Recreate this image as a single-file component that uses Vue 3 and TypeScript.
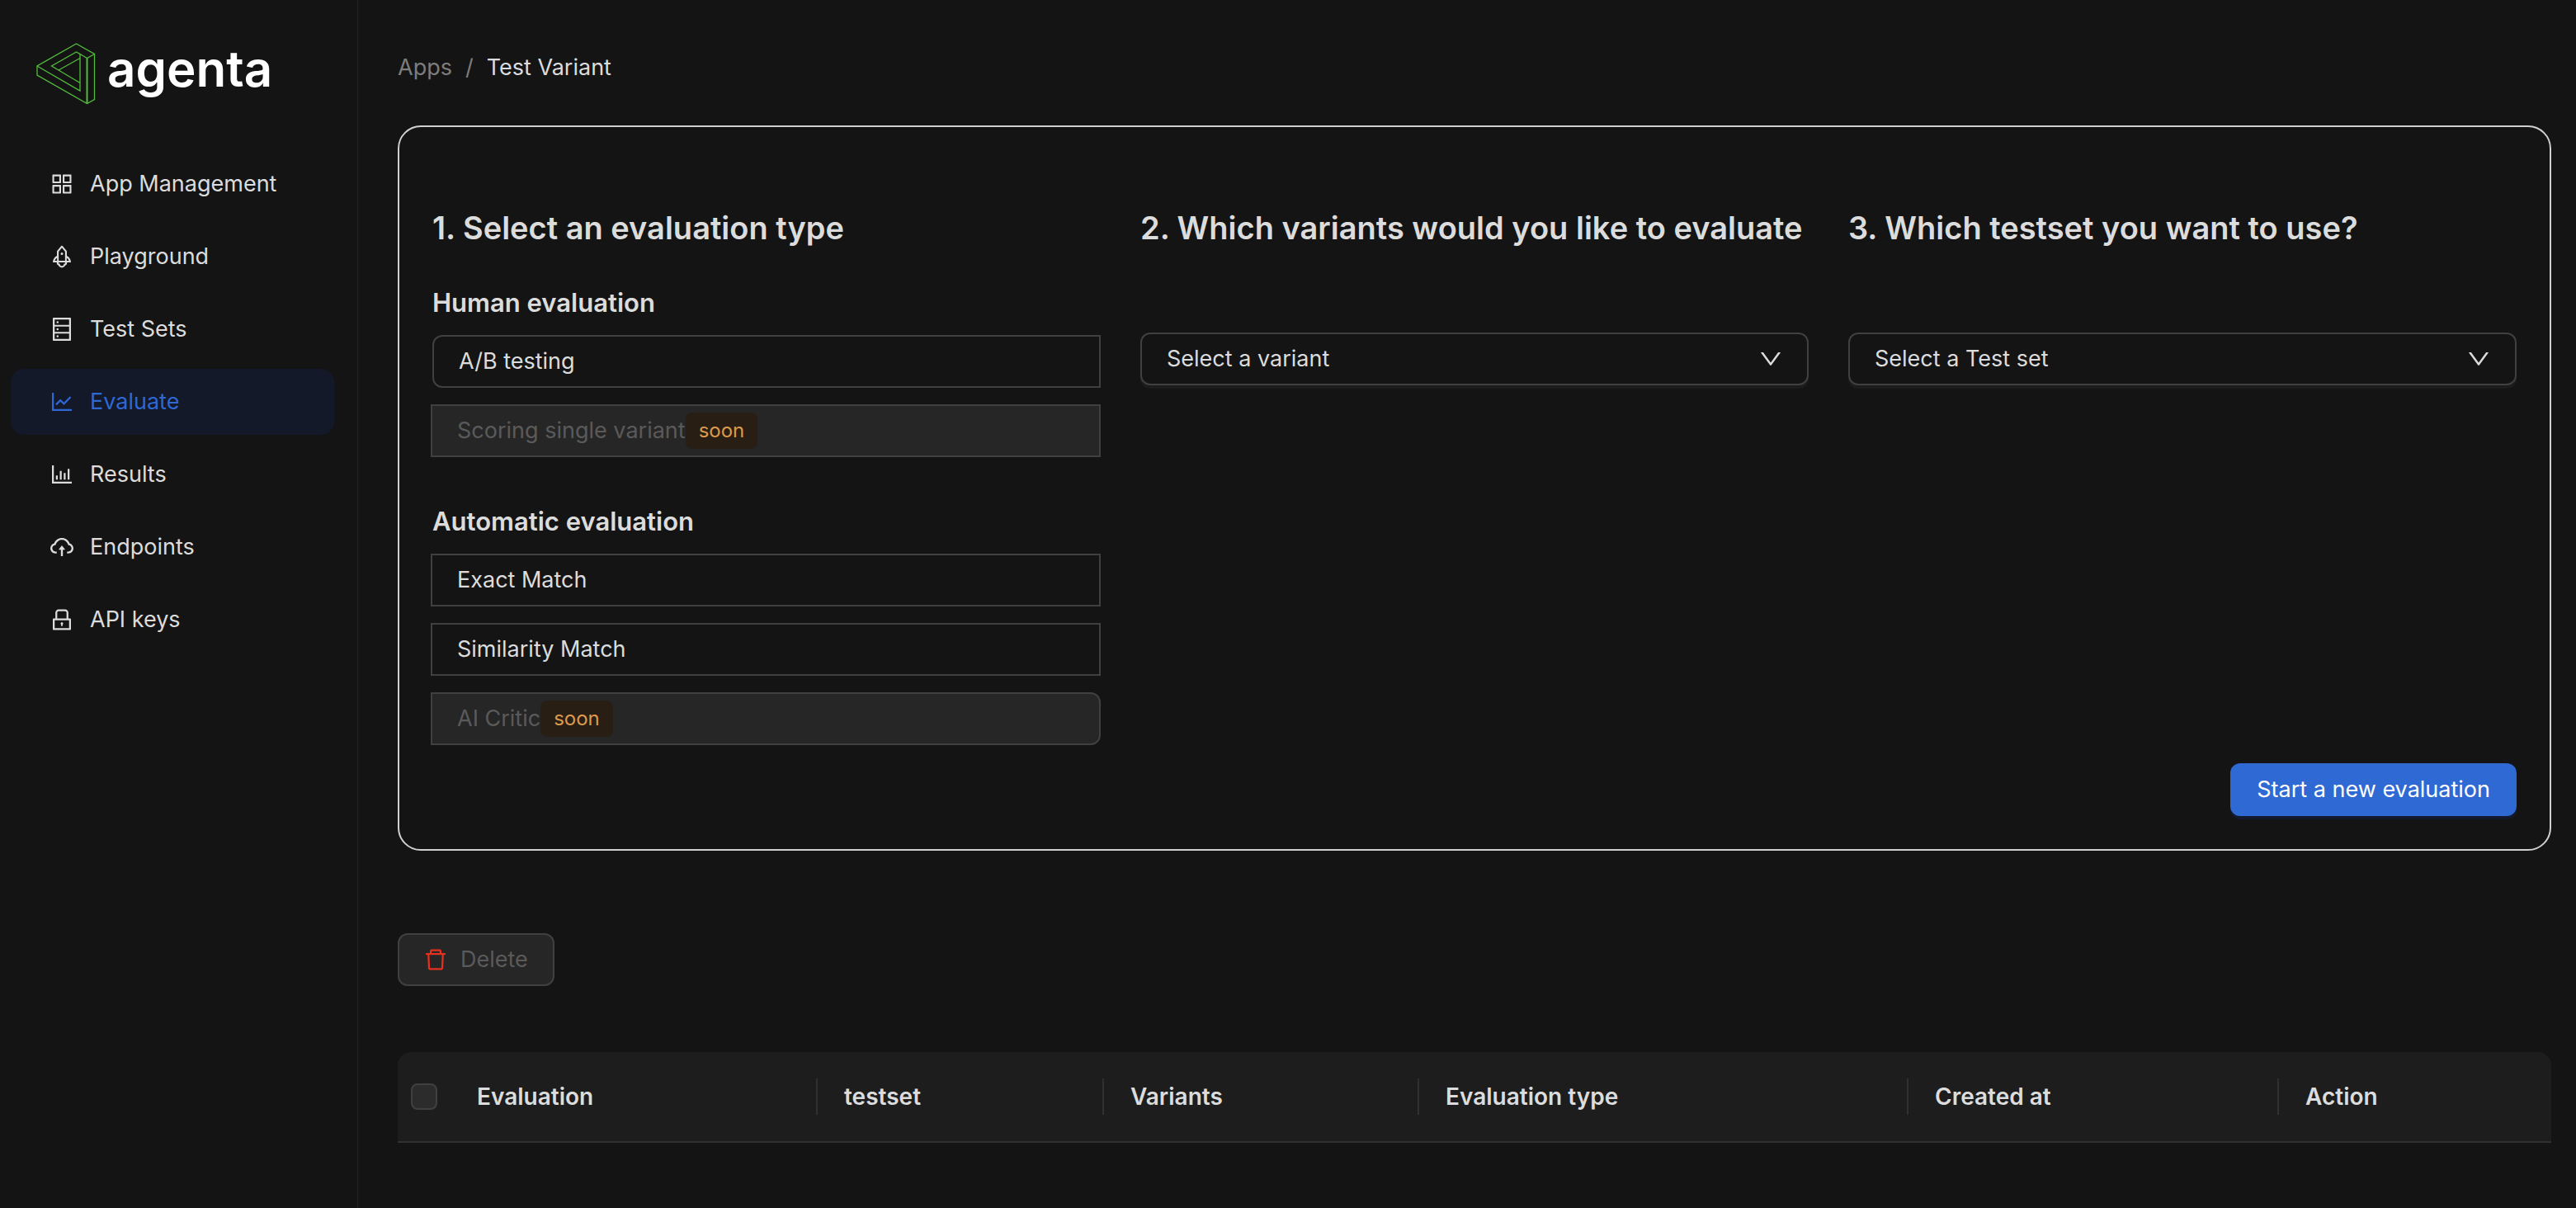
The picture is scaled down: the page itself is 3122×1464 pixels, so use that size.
<script setup lang="ts">
import { ref } from 'vue'

interface NavItem {
  label: string
  paths: string[]
  active?: boolean
}

interface EvaluationType {
  value: string
  label: string
  soon?: boolean
}

interface EvaluationGroup {
  title: string
  types: EvaluationType[]
}

const navItems: NavItem[] = [
  {
    label: 'App Management',
    paths: [
      'M464 144H160c-8.8 0-16 7.2-16 16v304c0 8.8 7.2 16 16 16h304c8.8 0 16-7.2 16-16V160c0-8.8-7.2-16-16-16zm-52 268H212V212h200v200zm452-268H560c-8.8 0-16 7.2-16 16v304c0 8.8 7.2 16 16 16h304c8.8 0 16-7.2 16-16V160c0-8.8-7.2-16-16-16zm-52 268H612V212h200v200zM464 544H160c-8.8 0-16 7.2-16 16v304c0 8.8 7.2 16 16 16h304c8.8 0 16-7.2 16-16V560c0-8.8-7.2-16-16-16zm-52 268H212V612h200v200zm452-268H560c-8.8 0-16 7.2-16 16v304c0 8.8 7.2 16 16 16h304c8.8 0 16-7.2 16-16V560c0-8.8-7.2-16-16-16zm-52 268H612V612h200v200z',
    ],
  },
  {
    label: 'Playground',
    paths: [
      'M864 736c0-111.6-65.4-208-160-252.9V317.3c0-15.1-5.3-29.7-15.1-41.2L536.5 95.4C530.1 87.8 521 84 512 84s-18.1 3.8-24.5 11.4L335.1 276.1a63.97 63.97 0 00-15.1 41.2v165.8C225.4 528 160 624.4 160 736h156.5c-2.3 7.2-3.5 15-3.5 23.8 0 22.1 7.6 43.7 21.4 60.8a97.2 97.2 0 0043.1 30.6c23.1 54 75.6 88.8 134.5 88.8 29.1 0 57.3-8.6 81.4-24.8 23.6-15.8 41.9-37.9 53-64a97 97 0 0043.1-30.5 97.52 97.52 0 0021.4-60.8c0-8.4-1.1-16.4-3.1-23.8H864zM762.3 621.4c9.4 14.6 17 30.3 22.5 46.6H700V558.7a211.6 211.6 0 0162.3 62.7zM388 483.1V318.8l124-147 124 147V668H388V483.1zM239.1 668c5.5-16.3 13.1-32 22.5-46.6 16.3-25.2 37.5-46.5 62.3-62.7V668h-84.8zm388.9 116.2c-5.2 3-11.2 4.2-17.1 3.4l-19.5-2.4-2.8 19.4c-5.4 37.9-38.4 66.5-76.7 66.5-38.3 0-71.3-28.6-76.7-66.5l-2.8-19.5-19.5 2.5a27.7 27.7 0 01-17.1-3.5c-8.7-5-14.1-14.3-14.1-24.4 0-10.6 5.9-19.4 14.6-23.8h231.3c8.8 4.5 14.6 13.3 14.6 23.8-.1 10.2-5.5 19.6-14.2 24.5zM464 400a48 48 0 1096 0 48 48 0 10-96 0z',
    ],
  },
  {
    label: 'Test Sets',
    paths: [
      'M832 64H192c-17.7 0-32 14.3-32 32v832c0 17.7 14.3 32 32 32h640c17.7 0 32-14.3 32-32V96c0-17.7-14.3-32-32-32zm-600 72h560v208H232V136zm560 480H232V408h560v208zm0 272H232V680h560v208zM304 240a40 40 0 1080 0 40 40 0 10-80 0zm0 272a40 40 0 1080 0 40 40 0 10-80 0zm0 272a40 40 0 1080 0 40 40 0 10-80 0z',
    ],
  },
  {
    label: 'Evaluate',
    active: true,
    paths: [
      'M888 792H200V168c0-4.4-3.6-8-8-8h-56c-4.4 0-8 3.6-8 8v688c0 4.4 3.6 8 8 8h752c4.4 0 8-3.6 8-8v-56c0-4.4-3.6-8-8-8zM305.8 637.7c3.1 3.1 8.1 3.1 11.3 0l138.3-137.6L583 628.5c3.1 3.1 8.2 3.1 11.3 0l275.4-275.3c3.1-3.1 3.1-8.2 0-11.3l-39.6-39.6a8.03 8.03 0 00-11.3 0l-230 229.9L461.4 404a8.03 8.03 0 00-11.3 0L266.3 586.7a8.03 8.03 0 000 11.3l39.5 39.7z',
    ],
  },
  {
    label: 'Results',
    paths: [
      'M888 792H200V168c0-4.4-3.6-8-8-8h-56c-4.4 0-8 3.6-8 8v688c0 4.4 3.6 8 8 8h752c4.4 0 8-3.6 8-8v-56c0-4.4-3.6-8-8-8zm-600-80h56c4.4 0 8-3.6 8-8V560c0-4.4-3.6-8-8-8h-56c-4.4 0-8 3.6-8 8v144c0 4.4 3.6 8 8 8zm152 0h56c4.4 0 8-3.6 8-8V384c0-4.4-3.6-8-8-8h-56c-4.4 0-8 3.6-8 8v320c0 4.4 3.6 8 8 8zm152 0h56c4.4 0 8-3.6 8-8V462c0-4.4-3.6-8-8-8h-56c-4.4 0-8 3.6-8 8v242c0 4.4 3.6 8 8 8zm152 0h56c4.4 0 8-3.6 8-8V304c0-4.4-3.6-8-8-8h-56c-4.4 0-8 3.6-8 8v400c0 4.4 3.6 8 8 8z',
    ],
  },
  {
    label: 'Endpoints',
    paths: [
      'M518.3 459a8 8 0 00-12.6 0l-112 141.7a7.98 7.98 0 006.3 12.9h73.9V856c0 4.4 3.6 8 8 8h60c4.4 0 8-3.6 8-8V613.7H624c6.7 0 10.4-7.7 6.3-12.9L518.3 459z',
      'M811.4 366.7C765.6 245.9 648.9 160 512.2 160S258.8 245.8 213 366.6C127.3 389.1 64 467.2 64 560c0 110.5 89.5 200 199.9 200H304c4.4 0 8-3.6 8-8v-60c0-4.4-3.6-8-8-8h-40.1c-33.7 0-65.4-13.4-89-37.7-23.5-24.2-36-56.8-34.9-90.6.9-26.4 9.9-51.2 26.2-72.1 16.7-21.3 40.1-36.8 66.1-43.7l37.9-9.9 13.9-36.6c8.6-22.8 20.6-44.1 35.7-63.4a245.6 245.6 0 0152.4-49.9c41.1-28.9 89.5-44.2 140-44.2s98.9 15.3 140 44.2c19.9 14 37.5 30.8 52.4 49.9 15.1 19.3 27.1 40.7 35.7 63.4l13.8 36.5 37.8 10C846.1 454.5 884 503.8 884 560c0 33.1-12.9 64.3-36.3 87.7a123.07 123.07 0 01-87.6 36.3H720c-4.4 0-8 3.6-8 8v60c0 4.4 3.6 8 8 8h40.1C870.5 760 960 670.5 960 560c0-92.7-63.1-170.7-148.6-193.3z',
    ],
  },
  {
    label: 'API keys',
    paths: [
      'M832 464h-68V240c0-70.7-57.3-128-128-128H388c-70.7 0-128 57.3-128 128v224h-68c-17.7 0-32 14.3-32 32v384c0 17.7 14.3 32 32 32h640c17.7 0 32-14.3 32-32V496c0-17.7-14.3-32-32-32zM332 240c0-30.9 25.1-56 56-56h248c30.9 0 56 25.1 56 56v224H332V240zm460 600H232V536h560v304zM484 701v53c0 4.4 3.6 8 8 8h40c4.4 0 8-3.6 8-8v-53a48.01 48.01 0 10-56 0z',
    ],
  },
]

const evaluationGroups: EvaluationGroup[] = [
  {
    title: 'Human evaluation',
    types: [
      { value: 'ab', label: 'A/B testing' },
      { value: 'scoring', label: 'Scoring single variant', soon: true },
    ],
  },
  {
    title: 'Automatic evaluation',
    types: [
      { value: 'exact', label: 'Exact Match' },
      { value: 'similarity', label: 'Similarity Match' },
      { value: 'critic', label: 'AI Critic', soon: true },
    ],
  },
]

const columns = [
  { key: 'evaluation', title: 'Evaluation' },
  { key: 'testset', title: 'testset' },
  { key: 'variants', title: 'Variants' },
  { key: 'type', title: 'Evaluation type' },
  { key: 'created', title: 'Created at' },
  { key: 'action', title: 'Action' },
]

const downPath =
  'M884 256h-75c-5.1 0-9.9 2.5-12.9 6.6L512 654.2 227.9 262.6c-3-4.1-7.8-6.6-12.9-6.6h-75c-6.5 0-10.3 7.4-6.5 12.7l352.6 486.1c12.8 17.6 39 17.6 51.7 0l352.6-486.1c3.9-5.3.1-12.7-6.4-12.7z'

const evaluationType = ref('')
const variant = ref('')
const testset = ref('')
</script>

<template>
  <div class="layout">
    <aside class="sidebar">
      <a class="logo" href="#">
        <svg class="logo-mark" viewBox="0 0 73 76" aria-hidden="true">
          <path d="M49.5 2 71.5 14.5V69.500L62.5 74.5 2 40V29Z" />
          <path d="M2 29 54 59V14.5L49.5 12 19.5 29 28 34 54 49.5" />
          <path d="M28 34 54 19.5M54 14.5 62.5 19.5 71.5 14.5" />
          <path class="logo-edge" d="M62.5 19.5V74.5" />
        </svg>
        <span class="logo-text">agenta</span>
      </a>
      <nav class="menu">
        <a
          v-for="item in navItems"
          :key="item.label"
          href="#"
          class="menu-item"
          :class="{ active: item.active }"
        >
          <svg class="icon" viewBox="64 64 896 896" aria-hidden="true">
            <path v-for="d in item.paths" :key="d" :d="d" />
          </svg>
          <span>{{ item.label }}</span>
        </a>
      </nav>
    </aside>

    <main class="content">
      <nav class="breadcrumb" aria-label="Breadcrumb">
        <a href="#">Apps</a>
        <span>/</span>
        <span class="current">Test Variant</span>
      </nav>

      <section class="card">
        <div class="steps">
          <div class="step">
            <h2>1. Select an evaluation type</h2>
            <div v-for="group in evaluationGroups" :key="group.title" class="group">
              <h3>{{ group.title }}</h3>
              <div class="options">
                <label
                  v-for="type in group.types"
                  :key="type.value"
                  class="option"
                  :class="{ disabled: type.soon }"
                >
                  <input
                    v-model="evaluationType"
                    type="radio"
                    name="evaluation-type"
                    :value="type.value"
                    :disabled="type.soon"
                  />
                  <span>{{ type.label }}</span>
                  <span v-if="type.soon" class="tag">soon</span>
                </label>
              </div>
            </div>
          </div>

          <div class="step">
            <h2><label for="variant">2. Which variants would you like to evaluate</label></h2>
            <div class="select-box">
              <select id="variant" v-model="variant">
                <option value="">Select a variant</option>
              </select>
              <svg class="icon arrow" viewBox="64 64 896 896" aria-hidden="true">
                <path :d="downPath" />
              </svg>
            </div>
          </div>

          <div class="step">
            <h2><label for="testset">3. Which testset you want to use?</label></h2>
            <div class="select-box">
              <select id="testset" v-model="testset">
                <option value="">Select a Test set</option>
              </select>
              <svg class="icon arrow" viewBox="64 64 896 896" aria-hidden="true">
                <path :d="downPath" />
              </svg>
            </div>
          </div>
        </div>
        <div class="card-actions">
          <button type="button" class="primary">Start a new evaluation</button>
        </div>
      </section>

      <button type="button" class="delete" disabled>
        <svg class="icon" viewBox="64 64 896 896" aria-hidden="true">
          <path
            d="M360 184h-8c4.4 0 8-3.6 8-8v8h304v-8c0 4.4 3.6 8 8 8h-8v72h72v-80c0-35.3-28.7-64-64-64H352c-35.3 0-64 28.7-64 64v80h72v-72zm504 72H160c-17.7 0-32 14.3-32 32v32c0 4.4 3.6 8 8 8h60.4l24.7 523c1.6 34.1 29.8 61 63.9 61h454c34.2 0 62.3-26.8 63.9-61l24.7-523H888c4.4 0 8-3.6 8-8v-32c0-17.7-14.3-32-32-32zM731.3 840H292.7l-24.2-512h487l-24.2 512z"
          />
        </svg>
        <span>Delete</span>
      </button>

      <table class="results">
        <colgroup>
          <col class="col-select" />
          <col v-for="column in columns" :key="column.key" :class="`col-${column.key}`" />
        </colgroup>
        <thead>
          <tr>
            <th class="select-cell">
              <input type="checkbox" aria-label="Select all evaluations" disabled />
            </th>
            <th v-for="column in columns" :key="column.key" scope="col">
              <div class="th-inner">{{ column.title }}</div>
            </th>
          </tr>
        </thead>
      </table>
    </main>
  </div>
</template>

<style>
body {
  margin: 0;
  background: #141414;
}
</style>

<style scoped>
* {
  box-sizing: border-box;
}

.layout {
  display: flex;
  min-height: 100vh;
  background: #141414;
  color: #dcdcdc;
  font-family: Inter, 'Liberation Sans', sans-serif;
  font-size: 27px;
  line-height: 44px;
}

a {
  color: inherit;
  text-decoration: none;
}

button,
select {
  font: inherit;
}

.icon {
  flex: none;
  width: 28px;
  height: 28px;
  fill: currentColor;
}

.sidebar {
  flex: none;
  width: 434px;
  border-right: 1px solid #242424;
}

.logo {
  display: flex;
  align-items: flex-start;
  gap: 14px;
  margin: 51px 0 56px 43px;
}

.logo-mark {
  width: 73px;
  height: 76px;
  fill: none;
  stroke: #52bd3c;
  stroke-width: 1.3;
}

.logo-edge {
  stroke-width: 2;
}

.logo-text {
  color: #fff;
  font-size: 60px;
  font-weight: 600;
  line-height: 64px;
}

.menu {
  display: flex;
  flex-direction: column;
  gap: 8px;
  padding: 0 28px 0 13px;
}

.menu-item {
  display: flex;
  align-items: center;
  gap: 20px;
  height: 80px;
  padding: 0 48px;
  border-radius: 16px;
  white-space: nowrap;
}

.menu-item.active {
  background: #131929;
  color: #2d68d4;
}

.content {
  flex: 1;
  min-width: 0;
  padding: 60px 30px 60px 48px;
}

.breadcrumb {
  display: flex;
  gap: 16px;
  color: #7d7d7d;
}

.breadcrumb .current {
  color: #dcdcdc;
}

.card {
  margin: 48px 0 100px;
  padding: 94px 40px 40px;
  border: 2px solid #d0d0d0;
  border-radius: 28px;
}

.steps {
  display: grid;
  grid-template-columns: repeat(3, minmax(0, 1fr));
  gap: 48px;
}

h2 {
  margin: 0 0 41px;
  font-size: 38px;
  font-weight: 600;
  line-height: 56px;
  white-space: nowrap;
}

h3 {
  margin: 0 0 17px;
  font-size: 31px;
  font-weight: 600;
  line-height: 44px;
}

.group + .group {
  margin-top: 56px;
}

.options {
  display: flex;
  flex-direction: column;
  gap: 20px;
}

.option {
  position: relative;
  display: flex;
  align-items: center;
  height: 64px;
  margin-left: -2px;
  padding: 0 30px;
  border: 2px solid #404040;
}

.group:first-of-type .option:first-child {
  margin-left: 0;
  border-radius: 12px 0 0 12px;
}

.group:last-of-type .option:last-child {
  border-radius: 0 12px 12px 0;
}

.option input {
  position: absolute;
  inset: 0;
  margin: 0;
  opacity: 0;
}

.option.disabled {
  background: #262626;
  color: #5a5a5a;
}

.tag {
  height: 44px;
  padding: 0 16px;
  border-radius: 8px;
  background: #291e14;
  color: #db9a4c;
  font-size: 24px;
}

.select-box {
  position: relative;
  padding-top: 58px;
}

select {
  display: block;
  width: 100%;
  height: 64px;
  padding: 0 60px 0 30px;
  appearance: none;
  border: 2px solid #404040;
  border-radius: 12px;
  background: #141414;
  box-shadow: 0 4px 0 #1c1c1c;
  color: #dcdcdc;
}

.arrow {
  position: absolute;
  right: 32px;
  bottom: 18px;
  pointer-events: none;
}

.card-actions {
  display: flex;
  justify-content: flex-end;
  margin-top: 22px;
}

.primary {
  height: 64px;
  padding: 0 32px;
  border: 0;
  border-radius: 12px;
  background: #2e69d4;
  box-shadow: 0 4px 0 #131a2d;
  color: #fff;
}

.delete {
  display: flex;
  align-items: center;
  gap: 16px;
  height: 64px;
  padding: 0 30px;
  border: 2px solid #404040;
  border-radius: 12px;
  background: #262626;
  color: #5a5a5a;
}

.delete .icon {
  fill: #e5301f;
}

.results {
  width: 100%;
  margin-top: 80px;
  border-spacing: 0;
  table-layout: fixed;
}

.col-select {
  width: 64px;
}

.col-evaluation {
  width: 445px;
}

.col-testset {
  width: 347px;
}

.col-variants {
  width: 382px;
}

.col-type {
  width: 593px;
}

.col-created {
  width: 449px;
}

.col-action {
  width: 330px;
}

th {
  height: 110px;
  padding: 0;
  border-bottom: 2px solid #303030;
  background: #1d1d1d;
  font-size: 28px;
  font-weight: 600;
  text-align: left;
}

th:first-child {
  border-top-left-radius: 16px;
}

th:last-child {
  border-top-right-radius: 16px;
}

.th-inner {
  padding: 0 32px;
  border-right: 2px solid #303030;
}

th:last-child .th-inner {
  border-right: 0;
}

.select-cell input {
  display: block;
  width: 32px;
  height: 32px;
  margin: 0 auto;
  appearance: none;
  border: 2px solid #404040;
  border-radius: 8px;
  background: #2c2c2c;
}
</style>
